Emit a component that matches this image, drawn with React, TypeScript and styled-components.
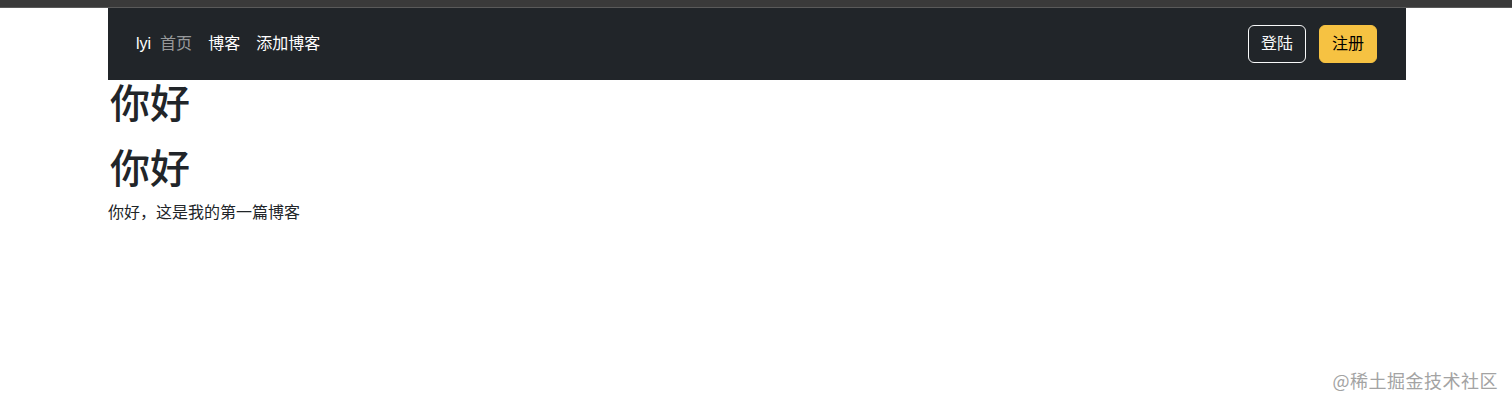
import React from "react";
import styled, { createGlobalStyle } from "styled-components";

const Global = createGlobalStyle`
  html, body { margin: 0; padding: 0; background: #fff; }
  body {
    font-family: "Liberation Sans", "Noto Sans CJK SC", sans-serif;
    color: #212529;
    font-size: 16px;
    line-height: 1.5;
  }
`;

const Page = styled.div`
  position: relative;
  width: 1512px;
  height: 406px;
  overflow: hidden;
`;

const TopStrip = styled.div`
  height: 7px;
  background: #3a3a3a;
  border-bottom: 1px solid #5a5a5a;
`;

const Content = styled.div`
  width: 1298px;
  margin-left: 108px;
`;

const NavBar = styled.nav`
  height: 72px;
  background: #212529;
  display: flex;
  align-items: center;
  justify-content: space-between;
  padding: 0 29px 0 28px;
  box-sizing: border-box;
`;

const NavLeft = styled.div`
  display: flex;
  align-items: center;
`;

const Brand = styled.a`
  color: #fff;
  font-size: 16px;
  margin-right: 9px;
  text-decoration: none;
`;

const NavLink = styled.a<{ $muted?: boolean }>`
  color: ${(p) => (p.$muted ? "rgba(255,255,255,0.55)" : "#fff")};
  font-size: 16px;
  text-decoration: none;
  margin-right: 16px;
`;

const NavRight = styled.div`
  display: flex;
  align-items: center;
  gap: 13px;
`;

const Button = styled.button<{ $variant: "outline" | "warning" }>`
  height: 38px;
  padding: 0 12px;
  border-radius: 6px;
  font-family: inherit;
  font-size: 16px;
  line-height: 1;
  cursor: pointer;
  border: 1px solid ${(p) => (p.$variant === "outline" ? "#f8f9fa" : "#f6c242")};
  background: ${(p) => (p.$variant === "outline" ? "transparent" : "#f6c242")};
  color: ${(p) => (p.$variant === "outline" ? "#f8f9fa" : "#000")};
`;

const Heading = styled.h1<{ $top?: number }>`
  margin: ${(p) => p.$top ?? 0}px 0 12px 2px;
  font-size: 40px;
  font-weight: 500;
  line-height: 42px;
  color: #212529;
  font-family: "Noto Sans CJK SC", sans-serif;
`;

const Para = styled.p`
  margin: 0;
  font-size: 16px;
  line-height: 24px;
  font-family: "Noto Sans CJK SC", sans-serif;
`;

const Watermark = styled.div`
  position: absolute;
  right: 14px;
  bottom: 12px;
  font-size: 18px;
  color: #a3a3a3;
  font-family: "Noto Sans CJK SC", sans-serif;
  letter-spacing: 0.5px;
`;

export default function App() {
  return (
    <Page>
      <Global />
      <TopStrip />
      <Content>
        <NavBar>
          <NavLeft>
            <Brand>lyi</Brand>
            <NavLink $muted>首页</NavLink>
            <NavLink>博客</NavLink>
            <NavLink>添加博客</NavLink>
          </NavLeft>
          <NavRight>
            <Button $variant="outline">登陆</Button>
            <Button $variant="warning">注册</Button>
          </NavRight>
        </NavBar>
        <Heading>你好</Heading>
        <Heading $top={23}>你好</Heading>
        <Para>你好，这是我的第一篇博客</Para>
      </Content>
      <Watermark>@稀土掘金技术社区</Watermark>
    </Page>
  );
}
